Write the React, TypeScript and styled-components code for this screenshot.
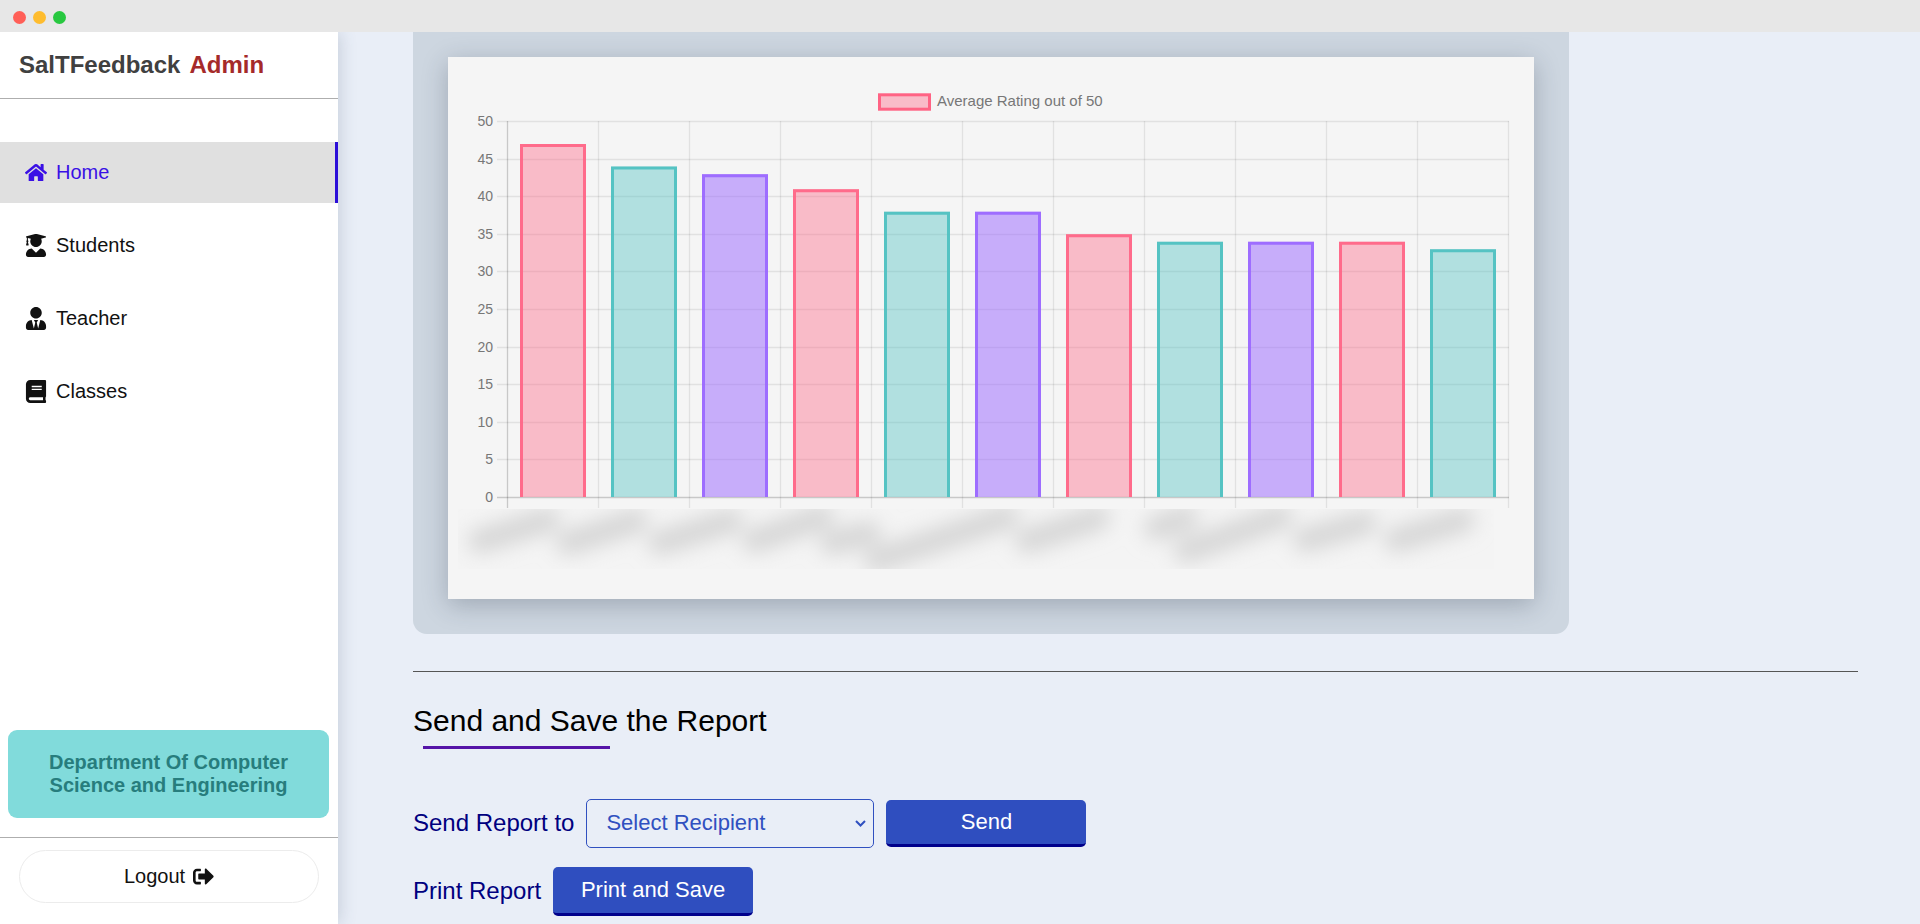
import React from 'react'
import styled, { createGlobalStyle } from 'styled-components'
import { FaBook, FaHome, FaSignOutAlt, FaUserGraduate, FaUserTie } from 'react-icons/fa'

const GlobalStyle = createGlobalStyle`
  html, body {
    margin: 0;
    padding: 0;
    height: 100%;
    overflow: hidden;
    font-family: "Liberation Sans", Arial, sans-serif;
  }
  * {
    box-sizing: border-box;
  }
`

const Window = styled.div`
  width: 1920px;
  height: 924px;
  display: flex;
  flex-direction: column;
  overflow: hidden;
  background: #e9eef7;
`

const TitleBar = styled.div`
  position: relative;
  z-index: 2;
  height: 32px;
  flex: none;
  display: flex;
  align-items: center;
  gap: 7px;
  padding: 2px 0 0 13px;
  background: #e7e7e7;
`

const Light = styled.span<{ $color: string }>`
  width: 13px;
  height: 13px;
  border-radius: 50%;
  background: ${(p) => p.$color};
`

const Body = styled.div`
  flex: 1;
  display: flex;
  min-height: 0;
`

const Sidebar = styled.aside`
  position: relative;
  z-index: 1;
  width: 338px;
  flex: none;
  display: flex;
  flex-direction: column;
  background: #fff;
  box-shadow: 2px 0 16px rgba(60, 80, 110, 0.2);
`

const Brand = styled.div`
  height: 67px;
  flex: none;
  display: flex;
  align-items: center;
  gap: 9px;
  padding-left: 19px;
  border-bottom: 1px solid #aeaeae;
  font-size: 24px;
  font-weight: 700;
  color: #404040;
`

const BrandAccent = styled.span`
  color: #a52a2a;
`

const Nav = styled.nav`
  display: flex;
  flex-direction: column;
  gap: 12px;
  margin-top: 43px;
`

const NavItem = styled.a<{ $active?: boolean }>`
  height: 61px;
  display: flex;
  align-items: center;
  gap: 9px;
  padding-left: 25px;
  font-size: 20px;
  color: ${(p) => (p.$active ? '#3a10e5' : '#111')};
  background: ${(p) => (p.$active ? '#e0e0e0' : 'transparent')};
  border-right: 3px solid ${(p) => (p.$active ? '#2c0fd8' : 'transparent')};
`

const NavIcon = styled.span`
  width: 22px;
  display: flex;
  justify-content: center;
`

const Department = styled.div`
  margin: auto 9px 19px 8px;
  height: 88px;
  display: flex;
  align-items: center;
  justify-content: center;
  text-align: center;
  padding: 0 30px;
  border-radius: 9px;
  background: #81dbdb;
  color: #277d7d;
  font-size: 20px;
  line-height: 23px;
  font-weight: 700;
`

const SidebarFoot = styled.div`
  height: 87px;
  flex: none;
  padding: 12px 19px 0;
  border-top: 1px solid #aeaeae;
`

const LogoutButton = styled.button`
  width: 300px;
  height: 53px;
  display: flex;
  align-items: center;
  justify-content: center;
  gap: 8px;
  padding: 0;
  border: 1px solid #ececec;
  border-radius: 27px;
  background: #fff;
  font-family: inherit;
  font-size: 20px;
  color: #111;
`

const Main = styled.main`
  flex: 1;
  min-width: 0;
  padding: 0 62px 0 75px;
`

const ChartPanel = styled.section`
  width: 1156px;
  height: 602px;
  padding: 25px 35px 35px;
  border-radius: 0 0 14px 14px;
  background: #cdd6e0;
`

const ChartCard = styled.div`
  width: 1086px;
  height: 542px;
  background: #f5f5f5;
  box-shadow: 0 6px 24px rgba(40, 50, 70, 0.28);

  svg {
    display: block;
    font-family: "Liberation Sans", Arial, sans-serif;
  }
`

const Rule = styled.hr`
  margin: 37px 0 0;
  border: 0;
  border-top: 1px solid #555;
`

const Heading = styled.h2`
  margin: 32px 0 0;
  font-size: 30px;
  line-height: 34px;
  font-weight: 400;
  color: #000;
`

const HeadingBar = styled.div`
  width: 187px;
  height: 3px;
  margin: 8px 0 50px 10px;
  background: #5514a8;
`

const FormRow = styled.div`
  display: flex;
  align-items: center;
  gap: 12px;
  height: 49px;
  margin-bottom: 19px;
`

const FormLabel = styled.label`
  padding-bottom: 2px;
  font-size: 24px;
  color: #00007f;
`

const chevron =
  "data:image/svg+xml,%3Csvg xmlns='http://www.w3.org/2000/svg' width='11' height='7'%3E%3Cpath d='M1 1l4.5 4.5L10 1' fill='none' stroke='%233050c0' stroke-width='2'/%3E%3C/svg%3E"

const RecipientSelect = styled.select`
  appearance: none;
  width: 288px;
  height: 49px;
  padding: 0 24px 2px 19px;
  border: 1px solid #3050c0;
  border-radius: 5px;
  background: url("${chevron}") no-repeat right 7px center;
  color: #3050c0;
  font-family: inherit;
  font-size: 22px;
`

const ActionButton = styled.button<{ $tall?: boolean }>`
  width: 200px;
  height: ${(p) => (p.$tall ? '49px' : '47px')};
  padding: 0 0 1px;
  border: 0;
  border-bottom: 3px solid #00008b;
  border-radius: 5px;
  background: #2f4ebf;
  color: #fff;
  font-family: inherit;
  font-size: 22px;
`

const navItems = [
  { label: 'Home', icon: <FaHome size={23} />, active: true },
  { label: 'Students', icon: <FaUserGraduate size={23} /> },
  { label: 'Teacher', icon: <FaUserTie size={23} /> },
  { label: 'Classes', icon: <FaBook size={23} /> },
]

const palette = [
  { fill: 'rgba(255, 99, 132, 0.4)', stroke: '#ff6384' },
  { fill: 'rgba(75, 192, 192, 0.4)', stroke: '#4bc0c0' },
  { fill: 'rgba(153, 102, 255, 0.5)', stroke: '#9966ff' },
]

const ratings = [47, 44, 43, 41, 38, 38, 35, 34, 34, 34, 33]
const ticks = [0, 5, 10, 15, 20, 25, 30, 35, 40, 45, 50]

// blurred-out class names under the x axis: [x1, y1, x2, y2]
const smudges = [
  [480, 541, 548, 520],
  [568, 543, 636, 521],
  [660, 543, 731, 521],
  [754, 541, 822, 517],
  [832, 543, 869, 533],
  [876, 560, 1007, 517],
  [1027, 541, 1098, 518],
  [1156, 528, 1186, 518],
  [1186, 551, 1281, 517],
  [1305, 540, 1365, 523],
  [1396, 540, 1463, 520],
]

const X0 = 507.5
const STEP = 91
const Y0 = 497.5
const UNIT = 7.52

function RatingChart() {
  return (
    <svg width="1086" height="542" viewBox="448 57 1086 542">
      <defs>
        <filter id="smudge" x="-10%" y="-100%" width="120%" height="300%">
          <feGaussianBlur stdDeviation="10" />
        </filter>
        <clipPath id="smudgeClip">
          <rect x="458" y="509" width="1036" height="60" />
        </clipPath>
      </defs>

      <rect x="879.5" y="94.8" width="50" height="14.4" fill="rgba(255, 99, 132, 0.4)" stroke="#ff6384" strokeWidth="3" />
      <text x="937" y="105.5" fontSize="15" fill="#777">Average Rating out of 50</text>

      {ticks.map((t) => {
        const y = Math.round(Y0 - t * UNIT - 0.5) + 0.5
        return (
          <g key={t}>
            <line x1="497" x2="1509" y1={y} y2={y} strokeWidth="1.3" stroke={t === 0 ? 'rgba(0,0,0,0.18)' : 'rgba(0,0,0,0.08)'} />
            <text x="493" y={y + 4} textAnchor="end" fontSize="14" fill="#777">{t}</text>
          </g>
        )
      })}
      {Array.from({ length: 12 }, (_, i) => (
        <line
          key={i}
          x1={X0 + i * STEP}
          x2={X0 + i * STEP}
          y1="121"
          y2="508"
          strokeWidth="1.3"
          stroke={i === 0 ? 'rgba(0,0,0,0.18)' : 'rgba(0,0,0,0.08)'}
        />
      ))}

      {ratings.map((value, i) => {
        const { fill, stroke } = palette[i % 3]
        const left = X0 + i * STEP + 12.5
        const top = Y0 - value * UNIT
        return (
          <g key={i}>
            <rect x={left} y={top} width="66" height={497 - top} fill={fill} />
            <path
              d={`M${left + 1.5} 497V${top + 1.5}H${left + 64.5}V497`}
              fill="none"
              stroke={stroke}
              strokeOpacity="0.9"
              strokeWidth="3"
            />
          </g>
        )
      })}

      <g clipPath="url(#smudgeClip)">
        <rect x="458" y="509" width="1036" height="60" fill="#f4f4f4" />
        <g filter="url(#smudge)" stroke="#d6d6d6" strokeWidth="24" strokeLinecap="round">
          {smudges.map(([x1, y1, x2, y2]) => (
            <line key={x1} x1={x1} y1={y1} x2={x2} y2={y2} />
          ))}
        </g>
      </g>
    </svg>
  )
}

export default function App() {
  return (
    <Window>
      <GlobalStyle />
      <TitleBar>
        <Light $color="#ff5f57" />
        <Light $color="#febc2e" />
        <Light $color="#28c840" />
      </TitleBar>
      <Body>
        <Sidebar>
          <Brand>
            <span>SalTFeedback</span>
            <BrandAccent>Admin</BrandAccent>
          </Brand>
          <Nav>
            {navItems.map((item) => (
              <NavItem key={item.label} $active={item.active}>
                <NavIcon>{item.icon}</NavIcon>
                {item.label}
              </NavItem>
            ))}
          </Nav>
          <Department>Department Of Computer Science and Engineering</Department>
          <SidebarFoot>
            <LogoutButton>
              Logout <FaSignOutAlt size={21} />
            </LogoutButton>
          </SidebarFoot>
        </Sidebar>
        <Main>
          <ChartPanel>
            <ChartCard>
              <RatingChart />
            </ChartCard>
          </ChartPanel>
          <Rule />
          <Heading>Send and Save the Report</Heading>
          <HeadingBar />
          <FormRow>
            <FormLabel>Send Report to</FormLabel>
            <RecipientSelect defaultValue="">
              <option value="">Select Recipient</option>
            </RecipientSelect>
            <ActionButton>Send</ActionButton>
          </FormRow>
          <FormRow>
            <FormLabel>Print Report</FormLabel>
            <ActionButton $tall>Print and Save</ActionButton>
          </FormRow>
        </Main>
      </Body>
    </Window>
  )
}
